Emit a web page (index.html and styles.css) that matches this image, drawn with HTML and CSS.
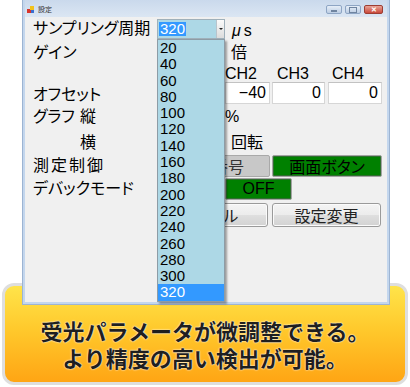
FILE: index.html
```html
<!DOCTYPE html>
<html lang="ja">
<head>
  <meta charset="UTF-8">
  <meta name="viewport" content="width=device-width, initial-scale=1.0">
  <title>設定</title>
  <link rel="stylesheet" href="styles.css">
</head>
<body>
  <div class="window">
    <div class="titlebar">
      <svg class="app-icon" width="8" height="8" viewBox="0 0 8 8">
        <rect x="0" y="3" width="4" height="4" fill="#d9342b"/>
        <rect x="3" y="0" width="4" height="4" fill="#f2c21b"/>
        <rect x="4" y="4" width="3" height="3" fill="#3b6fd1"/>
      </svg>
      <span class="title">設定</span>
      <div class="controls">
        <span class="ctl ctl-min"></span>
        <span class="ctl ctl-max"></span>
        <span class="ctl ctl-close">✕</span>
      </div>
    </div>

    <div class="client">
      <div class="form">
        <!-- サンプリング周期 -->
        <div class="label r1">サンプリング周期</div>
        <div class="combo r1 ca">
          <span class="combo-value">320</span>
          <span class="combo-arrow"></span>
        </div>
        <div class="unit unit-us r1 cb"><span class="mu">μ</span>s</div>

        <!-- ゲイン -->
        <div class="label r2">ゲイン</div>
        <div class="textbox r2 ca"></div>
        <div class="unit r2 cb">倍</div>

        <!-- チャンネル見出し（CH1 はリストの下） -->
        <div class="ch r3 cb">CH2</div>
        <div class="ch ch-c r3 cc">CH3</div>
        <div class="ch ch-d r3 cd">CH4</div>

        <!-- オフセット -->
        <div class="label r4">オフセット</div>
        <div class="textbox r4 ca"></div>
        <div class="textbox tb-b r4 cb">−40</div>
        <div class="textbox tb-c r4 cc">0</div>
        <div class="textbox tb-d r4 cd">0</div>

        <!-- グラフ -->
        <div class="label r5"><span class="lab-main">グラフ</span>縦</div>
        <div class="textbox r5 ca"></div>
        <div class="unit unit-pct r5 cb">%</div>

        <div class="label r6"><span class="lab-indent">横</span></div>
        <div class="textbox r6 ca"></div>
        <div class="unit r6 cb">回転</div>

        <!-- 測定制御 -->
        <div class="label label-wide r7">測定制御</div>
        <div class="btn btn-gray btn-no r7">画面番号</div>
        <div class="btn btn-green btn-screen r7">画面ボタン</div>

        <!-- デバックモード -->
        <div class="label r8">デバックモード</div>
        <div class="btn btn-green btn-on r8 ca"></div>
        <div class="btn btn-green btn-off r8">OFF</div>

        <!-- 下部ボタン -->
        <div class="btn btn-std btn-cancel r9">キャンセル</div>
        <div class="btn btn-std btn-apply r9">設定変更</div>
      </div>

      <ul class="dropdown">
        <li>20</li>
        <li>40</li>
        <li>60</li>
        <li>80</li>
        <li>100</li>
        <li>120</li>
        <li>140</li>
        <li>160</li>
        <li>180</li>
        <li>200</li>
        <li>220</li>
        <li>240</li>
        <li>260</li>
        <li>280</li>
        <li>300</li>
        <li class="selected">320</li>
      </ul>
    </div>
  </div>

  <div class="banner">
    <p>受光パラメータが微調整できる。<br>より精度の高い検出が可能。</p>
  </div>
</body>
</html>
```

FILE: styles.css
```css
:root {
  --client-bg: #f0f0f0;
  --frame: #c3d6ed;
  --list-bg: #add8e6;
  --select: #3399ff;
  --green: #008000;
}

* {
  box-sizing: border-box;
  margin: 0;
  padding: 0;
}

body {
  width: 410px;
  height: 387px;
  overflow: hidden;
  background: #ffffff;
  color: #000;
  font-family: "Liberation Sans", "Noto Sans CJK JP", sans-serif;
}

/* ウィンドウ */
.window {
  position: relative;
  z-index: 1;
  margin-left: 22px;
  width: 368px;
  height: 305px;
  background: var(--frame);
  border: 1px solid #9db4d2;
  border-top: none;
  padding: 0 2px 2px;
  display: flex;
  flex-direction: column;
}

.titlebar {
  height: 17px;
  display: flex;
  align-items: flex-start;
  padding-left: 2px;
  background: linear-gradient(#cad9ec, #dbe6f3);
}

.app-icon {
  margin-top: 6px;
}

.title {
  margin: 5px 0 0 3px;
  font-family: "Noto Sans CJK JP", sans-serif;
  font-size: 7px;
  line-height: 9px;
  color: #333;
}

.controls {
  margin: 5px 4px 0 auto;
  display: flex;
  gap: 3px;
}

.ctl {
  width: 16px;
  height: 9px;
  border: 1px solid #8ea5c4;
  border-radius: 2px;
  background: linear-gradient(#e6eef8, #bccde3);
  display: flex;
  align-items: center;
  justify-content: center;
}

.ctl-min::after {
  content: "";
  width: 6px;
  height: 2px;
  margin-top: 2px;
  background: #6f84a0;
}

.ctl-max::after {
  content: "";
  width: 6px;
  height: 4px;
  border: 1px solid #6f84a0;
}

.ctl-close {
  width: 19px;
  border-color: #9c3d33;
  background: linear-gradient(#e9a497, #c9483a);
  color: #fff;
  font-size: 7px;
  line-height: 7px;
  font-weight: bold;
}

/* クライアント領域 */
.client {
  position: relative;
  flex: 1;
  background: var(--client-bg);
}

.form {
  padding-top: 1px;
  display: grid;
  grid-template-columns: 132px 68px 47px 56px 59px;
  grid-template-rows: 22px 25px 17px 22px 26px 25px 22px 24px 26px;
  align-items: center;
  font-size: 16px;
  font-feature-settings: "palt" 1;
}

.r1 { grid-row: 1; }
.r2 { grid-row: 2; }
.r3 { grid-row: 3; }
.r4 { grid-row: 4; }
.r5 { grid-row: 5; }
.r6 { grid-row: 6; }
.r7 { grid-row: 7; }
.r8 { grid-row: 8; }
.r9 { grid-row: 9; }

.ca { grid-column: 2; }
.cb { grid-column: 3; }
.cc { grid-column: 4; }
.cd { grid-column: 5; }

.label {
  grid-column: 1;
  padding-left: 8px;
  white-space: nowrap;
  line-height: 20px;
}

.r4.label {
  padding-top: 3px;
}

.label-wide {
  letter-spacing: 2px;
}

.lab-main {
  display: inline-block;
  width: 47px;
}

.lab-indent {
  padding-left: 47px;
}

.unit {
  white-space: nowrap;
  padding-left: 6px;
  line-height: 20px;
}

.unit-us {
  padding: 3px 0 0 7px;
}

.mu {
  font-style: italic;
  margin-right: 3px;
}

.unit-pct {
  padding-left: 0;
}

.ch {
  line-height: 17px;
}

.ch-c { padding-left: 5px; }
.ch-d { padding-left: 4px; }

.textbox {
  height: 22px;
  background: #fff;
  border: 1px solid #d6d6d6;
  border-top-color: #c2c2c2;
  text-align: right;
  padding-right: 3px;
  line-height: 20px;
  font-size: 16px;
}

.tb-b { width: 45px; }
.tb-c { width: 53px; }
.tb-d { width: 54px; }

/* コンボボックス */
.combo {
  height: 20px;
  background: var(--list-bg);
  border: 1px solid #9fb0ba;
  display: flex;
  align-items: center;
  font-size: 15px;
}

.combo-value {
  margin-left: 1px;
  padding: 0 1px;
  line-height: 14px;
  background: var(--select);
  color: #fff;
}

.combo-arrow {
  margin-left: auto;
  width: 8px;
  height: 100%;
  border-left: 1px solid #b9c4cc;
  background: linear-gradient(#fbfbfb, #dcdcdc);
  display: flex;
  align-items: center;
  justify-content: center;
}

.combo-arrow::after {
  content: "";
  border-left: 2px solid transparent;
  border-right: 2px solid transparent;
  border-top: 2px solid #222;
}

/* ボタン */
.btn {
  height: 22px;
  display: flex;
  align-items: center;
  justify-content: center;
  white-space: nowrap;
  font-size: 16px;
  border-radius: 2px;
}

.btn-gray {
  background: #c8c8c8;
  border: 1px solid #a9a9a9;
  color: #333;
}

.btn-green {
  background: var(--green);
  border: 1px solid #a3a3a3;
  box-shadow: inset 0 0 0 1px #2f6f2f;
  color: #000;
}

.btn-std {
  height: 24px;
  align-self: end;
  border: 1px solid #9a9a9a;
  border-radius: 3px;
  background: linear-gradient(#f4f4f4 0%, #ececec 50%, #dfdfdf 51%, #d2d2d2 100%);
  box-shadow: inset 0 0 0 1px #fbfbfb;
  color: #222;
}

.btn-no {
  grid-column: 2 / 4;
  margin: 0 2px 0 3px;
  padding-right: 6px;
}

.btn-screen {
  grid-column: 4 / 6;
  margin-right: 5px;
}

.btn-on {
  margin: 0 2px 0 3px;
}

.btn-off {
  grid-column: 3 / 5;
  width: 67px;
}

.btn-cancel {
  grid-column: 2 / 4;
  margin: 0 4px 0 1px;
  padding-right: 22px;
}

.btn-apply {
  grid-column: 4 / 6;
  margin-right: 6px;
}

/* ドロップダウンリスト */
.dropdown {
  position: absolute;
  left: 132px;
  top: 22px;
  width: 68px;
  list-style: none;
  background: var(--list-bg);
  border: 1px solid #8d9ca6;
  box-shadow: 2px 2px 2px rgba(0, 0, 0, 0.35);
  font-size: 15px;
}

.dropdown li {
  height: 16.3px;
  line-height: 16.3px;
  padding-left: 2px;
}

.dropdown li.selected {
  background: var(--select);
  color: #fff;
}

/* 説明バナー */
.banner {
  margin: -22px 0 0 2px;
  width: 406px;
  height: 102px;
  border: 3px solid #dedede;
  border-radius: 12px;
  background: linear-gradient(#ffe44a 0%, #ffc92c 45%, #ffa514 100%);
  padding-top: 31px;
  text-align: center;
}

.banner p {
  font-family: "Noto Sans CJK JP", sans-serif;
  font-size: 22px;
  font-weight: 700;
  line-height: 27px;
  color: #1f1f1f;
  text-shadow: 0 0 2px rgba(255, 255, 255, 0.9), 0 0 1px #fff;
}
```
